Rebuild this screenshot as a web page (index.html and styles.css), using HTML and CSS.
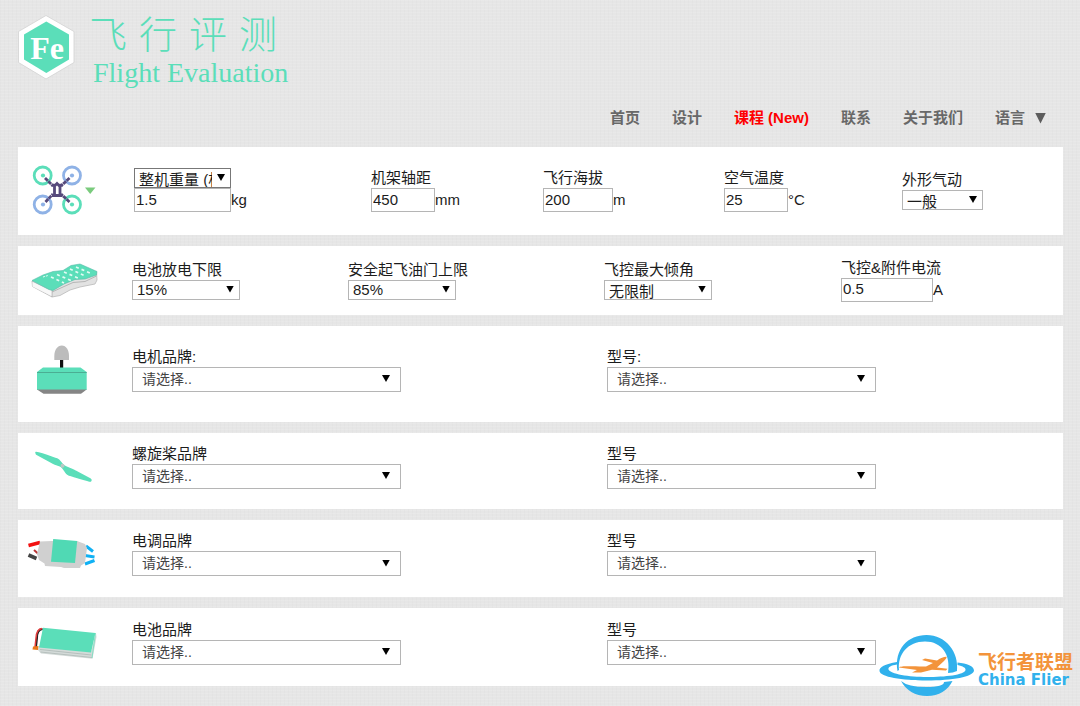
FILE: index.html
```html
<!DOCTYPE html>
<html lang="zh-CN">
<head>
<meta charset="utf-8">
<meta name="viewport" content="width=device-width, initial-scale=1">
<title>飞行评测 Flight Evaluation</title>
<link rel="stylesheet" href="styles.css">
</head>
<body>
<header class="header">
  <div class="brand">
    <svg class="brand-mark" viewBox="16 14 60 66" aria-label="Fe">
      <path d="M46 15.500 74 31.500V62.500L46 79 18.500 62.500V31.500Z" fill="#fff" stroke="#d2d2d2" stroke-width=".8"/>
      <path d="M46.300 21.500 69 34.500V59.500L46.300 73 24 59.500V34.500Z" fill="#5bdeb9"/>
      <text class="mark-text" x="47" y="58.500" text-anchor="middle">Fe</text>
    </svg>
    <div class="brand-name">
      <h1 class="title"><span>飞</span><span>行</span><span>评</span><span>测</span></h1>
      <p class="subtitle">Flight Evaluation</p>
    </div>
  </div>
  <nav class="nav">
    <a href="#">首页</a>
    <a href="#">设计</a>
    <a href="#" class="new">课程 (New)</a>
    <a href="#">联系</a>
    <a href="#">关于我们</a>
    <a href="#" class="language">语言 <i class="caret"></i></a>
  </nav>
</header>

<main class="panels">
  <section class="panel general">
    <svg class="icon" viewBox="24 160 76 60" aria-hidden="true">
      <g fill="none" stroke-width="2.800">
        <circle cx="42.700" cy="174.500" r="8.500" stroke="#5bdeb9"/><circle cx="72" cy="174.500" r="8.500" stroke="#8fb2e6"/>
        <circle cx="42.700" cy="203.500" r="8.500" stroke="#8fb2e6"/><circle cx="72" cy="203.500" r="8.500" stroke="#5bdeb9"/>
      </g>
      <circle cx="43" cy="174.500" r="2.100" fill="#5bdeb9"/><circle cx="72" cy="174.500" r="2.100" fill="#8fb2e6"/>
      <circle cx="43" cy="203.500" r="2.100" fill="#8fb2e6"/><circle cx="72" cy="203.500" r="2.100" fill="#5bdeb9"/>
      <g fill="none" stroke="#56497b" stroke-width="2.800">
        <path d="M45 177 53 185M69.500 177 61 185M45.500 201 53 193M69.500 201 61 193" stroke-dasharray="4 .6"/>
        <path d="M52 184 55 184.500 57 182.500 59 184.500 62.500 184M52 194.500H62.500M54.500 184V194.500M60 184V194.500"/>
      </g>
      <path d="M85 186.500H95.500L90.200 193Z" fill="#7acb7d"/>
    </svg>
    <div class="fields">
      <div class="field">
        <span class="select w-weight dark"><select class="low" aria-label="整机重量"><option>整机重量 (相关)</option></select></span>
        <div class="entry"><input class="w-weight" type="text" value="1.5" aria-label="重量 kg"><span>kg</span></div>
      </div>
      <div class="field">
        <label for="frame">机架轴距</label>
        <div class="entry"><input id="frame" class="w-small" type="text" value="450"><span>mm</span></div>
      </div>
      <div class="field">
        <label for="altitude">飞行海拔</label>
        <div class="entry"><input id="altitude" class="w-medium" type="text" value="200"><span>m</span></div>
      </div>
      <div class="field">
        <label for="temp">空气温度</label>
        <div class="entry"><input id="temp" class="w-small" type="text" value="25"><span>°C</span></div>
      </div>
      <div class="field">
        <label for="aero">外形气动</label>
        <span class="select w-aero"><select id="aero" class="low"><option>一般</option></select></span>
      </div>
    </div>
  </section>

  <section class="panel control">
    <svg class="icon" viewBox="24 251 76 60" aria-hidden="true">
      <path d="M32 281 48 289 64 283 74 279 85 278 96.500 272 97 280 95 284 80 287 70 290 60 295.500 52 297 32.500 286.500Z" fill="#e2e2e2" stroke="#b9b9b9" stroke-width=".8"/>
      <path d="M52 292 63 287 73 282.500 85 281.500 96.500 276M52 290V297" fill="none" stroke="#a9a9a9" stroke-width=".8"/>
      <path d="M32.500 282V286.500L51.500 296V291Z" fill="#f8f8f8"/>
      <path d="M32 280.500 43 275 53 271.500 63 270.500 71 265.500 80 264 97 271.500 96.500 275 85 279 75 279.500 64 284 53 290.500 49 289.500Z" fill="#5bdeb9" stroke="#59baa9" stroke-width=".6"/>
      <g stroke="#e4fbf4" stroke-width="1.700" fill="none">
        <path d="M70 269 84 275.500" stroke-dasharray="3 3"/><path d="M76 267 90 273" stroke-dasharray="3 3"/>
        <path d="M64 272 78 278" stroke-dasharray="3 3"/><path d="M57 274.500 71 280.500" stroke-dasharray="3 3"/>
        <path d="M51 277 64 283" stroke-dasharray="3 3"/><path d="M43 277 48 275.500" stroke-width="1" stroke-dasharray="2 1"/>
      </g>
    </svg>
    <div class="fields">
      <div class="field">
        <label for="discharge">电池放电下限</label>
        <span class="select w-limit"><select id="discharge"><option>15%</option></select></span>
      </div>
      <div class="field">
        <label for="throttle">安全起飞油门上限</label>
        <span class="select w-limit"><select id="throttle"><option>85%</option></select></span>
      </div>
      <div class="field">
        <label for="tilt">飞控最大倾角</label>
        <span class="select w-limit"><select id="tilt" class="low"><option>无限制</option></select></span>
      </div>
      <div class="field">
        <label for="current">飞控&amp;附件电流</label>
        <div class="entry"><input id="current" class="w-current" type="text" value="0.5"><span>A</span></div>
      </div>
    </div>
  </section>

  <section class="panel product motor">
    <svg class="icon" viewBox="24 340 76 60" aria-hidden="true">
      <path d="M54.300 360V356C54.300 350 57.500 345.500 61.800 345.500S69 350 69 356V360Z" fill="#bcbcbc"/>
      <path d="M60 360H63.200V368H60Z" fill="#111"/>
      <path d="M43 367.500H80.500L86.700 372V390H37V372Z" fill="#5bdeb9"/>
      <path d="M37 389.500H86.700L81 393.700H43.500Z" fill="#858585"/>
      <path d="M37 372.500H86.700" stroke="#4aa78e" stroke-width=".9"/>
    </svg>
    <div class="fields">
      <div class="field"><label for="motor">电机品牌:</label><span class="select"><select id="motor"><option>请选择..</option></select></span></div>
      <div class="field"><label for="motor-type">型号:</label><span class="select"><select id="motor-type"><option>请选择..</option></select></span></div>
    </div>
  </section>

  <section class="panel product propeller">
    <svg class="icon" viewBox="24 437 76 60" aria-hidden="true">
      <path d="M36 452.500C42 453.500 51 457 57 459 60 460 61 464 64 466 67 468 71 468.500 75 471L90 479C91.500 480 91 481 89.500 481 83 479 74 476.500 69 475 65 474 65 469 61.500 466.500 59 465 56 465 53 463L36.500 454Z" fill="#5bdeb9" stroke="#5bdeb9" stroke-width="1.600" stroke-linejoin="round"/>
      <circle cx="62.500" cy="465.800" r="2" fill="#b9c9c5"/>
    </svg>
    <div class="fields">
      <div class="field"><label for="prop">螺旋桨品牌</label><span class="select"><select id="prop"><option>请选择..</option></select></span></div>
      <div class="field"><label for="prop-type">型号</label><span class="select"><select id="prop-type"><option>请选择..</option></select></span></div>
    </div>
  </section>

  <section class="panel product esc">
    <svg class="icon" viewBox="24 525 76 60" aria-hidden="true">
      <g fill="none" stroke-width="3.600">
        <path d="M28.500 545.500 40 542.500" stroke="#f21111"/><path d="M34 550 38.500 554" stroke="#b93434" stroke-width="2"/><path d="M28.500 555 36.500 558.500" stroke="#444"/>
        <path d="M86 546 93 551.500M85 555.500 94.500 557M85 564 94.500 560.500" stroke="#10b1f4" stroke-width="3"/>
      </g>
      <path d="M40 541.500 52 541 77 541 85 544 87 548 85 563 81 565.500 80 568 64 568 61 567 45 566 44.500 563.500 39 560 37 554Z" fill="#d0d0d0"/>
      <path d="M53.200 539 77.200 541 75 563 51 561.800Z" fill="#50d9b4"/>
    </svg>
    <div class="fields">
      <div class="field"><label for="esc">电调品牌</label><span class="select"><select id="esc"><option>请选择..</option></select></span></div>
      <div class="field"><label for="esc-type">型号</label><span class="select"><select id="esc-type"><option>请选择..</option></select></span></div>
    </div>
  </section>

  <section class="panel product battery">
    <svg class="icon" viewBox="24 613 76 60" aria-hidden="true">
      <path d="M39 646 91 652 96 633 96.500 637 92.500 658.800 41 653.500 38 650Z" fill="#d4dbd9"/>
      <path d="M40 649.500 91.500 655M40.500 652 92 657.500" stroke="#aeb9b6" stroke-width=".8"/>
      <path d="M43 627.700 95.500 633 91 652.500 39 647.500Z" fill="#5bdeb9"/>
      <path d="M95.500 633 92 658" stroke="#86dfc5"/>
      <path d="M42.500 629Q37 629.500 37 638L36 647" fill="none" stroke="#222" stroke-width="2"/>
      <path d="M42 628.500Q36.500 629 36 638L35 647" fill="none" stroke="#e53d3d" stroke-width="1.500"/>
      <path d="M33 646.500 38.500 646 38 650 32.500 649.500Z" fill="#ec791b"/>
    </svg>
    <div class="fields">
      <div class="field"><label for="battery">电池品牌</label><span class="select"><select id="battery"><option>请选择..</option></select></span></div>
      <div class="field"><label for="battery-type">型号</label><span class="select"><select id="battery-type"><option>请选择..</option></select></span></div>
    </div>
  </section>
</main>

<svg class="watermark" viewBox="876 632 204 68" role="img" aria-label="飞行者联盟 China Flier">
  <path d="M897.500 671C894 649 908 635 926.500 635 946 635 959 652 957 671Q953 673 948 673C951 655 942 641.500 925 641.500 908 641.500 897.500 654 899 670Z" fill="#31b1ec"/>
  <path d="M901 681Q908 687 926 687T944 682L952.500 681C948 690 939 696 927 696S906 690 901 681Z" fill="#31b1ec"/>
  <path d="M897 662C885 664 879 667 879.500 671 880 677 902 680.500 927 680.500S973.500 677 974 670.500C974 666 967 663.500 957.500 662.500V665C963 666 966 668 965.500 670 964.500 675 945 677 927 677S890 674 888.500 669.500C888 667 891 665.500 897 664.500Z" fill="#31b1ec"/>
  <path d="M899 667.500C901 665.500 917 666.800 926 666.500L933 663 922 660 925 658.500 937 660.500Q943 656.500 946.500 656.800 947 658 944 661L937 667.500 947.500 668.800 946 670.500 932 669.800 921 672.500 912 672.500 917 670Z" fill="#f3943b"/>
  <text class="club" x="978" y="669">飞行者联盟</text>
  <text class="club-en" x="978" y="685">China Flier</text>
</svg>
</body>
</html>
```
FILE: styles.css
```css
* { box-sizing: border-box; }

body {
  margin: 0;
  padding: 14px 17px 20px 18px;
  position: relative;
  color: #1c1c1c;
  font: 15px/20px "Liberation Sans", "Noto Sans CJK SC", sans-serif;
  background-color: #e6e6e6;
  background-image:
    repeating-linear-gradient(0deg, rgba(255, 255, 255, .1) 0 1px, transparent 1px 3px),
    repeating-linear-gradient(90deg, rgba(0, 0, 0, .01) 0 1px, transparent 1px 4px);
}

.brand { display: flex; align-items: flex-start; gap: 13px; }
.brand-mark { width: 60px; height: 66px; margin-left: -2px; }
.mark-text { font: bold 32px "Liberation Serif", serif; fill: #fff; }
.brand-name { color: #5bdeb9; }
.title {
  display: flex;
  gap: 12px;
  margin: 0;
  font: 300 38px/36px "Noto Sans CJK SC", sans-serif;
}
.subtitle {
  margin: 0;
  padding: 6px 0 0 4px;
  font: 28px/34px "Liberation Serif", serif;
}

.nav {
  display: flex;
  justify-content: flex-end;
  gap: 32px;
  margin-top: 18px;
  padding-right: 17px;
  font-weight: bold;
}
.nav a { color: #686868; text-decoration: none; }
.nav .new { color: #f00; }
.language { display: flex; align-items: center; gap: 10px; }
.caret { width: 11px; height: 11px; background: #5c5c5c; clip-path: polygon(0 0, 100% 0, 50% 100%); }

.panels { display: grid; gap: 11px; margin-top: 19px; }
.panel { display: flex; align-items: center; gap: 32px; padding-left: 6px; background: #fff; }
.general { min-height: 88px; gap: 34px; }
.control { min-height: 69px; }
.product { padding-bottom: 8px; }
.motor { min-height: 96px; }
.propeller { min-height: 76px; }
.esc { min-height: 77px; }
.battery { min-height: 78px; }

.icon { width: 76px; height: 60px; flex: none; }
.fields { display: grid; flex: 1; align-items: center; padding-bottom: 2px; }
.general .fields { grid-template-columns: 237fr 172fr 181fr 178fr 161fr; }
.control .fields { grid-template-columns: 216fr 256fr 237fr 222fr; }
.product .fields { grid-template-columns: 475fr 456fr; }

.field { min-width: 0; }
.field label { display: block; white-space: nowrap; }
.entry { display: flex; align-items: center; }

input, select {
  margin: 0;
  border: 1px solid #b5b5b5;
  border-radius: 0;
  background: #fff;
  color: inherit;
  font: inherit;
}
input { height: 24px; padding: 0 2px 2px 1px; }

.select { display: block; position: relative; width: 108px; }
.select::after {
  content: "";
  position: absolute;
  right: 6px;
  top: 50%;
  width: 8px;
  height: 7px;
  margin-top: -4px;
  background: #000;
  clip-path: polygon(0 0, 100% 0, 50% 100%);
  pointer-events: none;
}
select {
  display: block;
  width: 100%;
  height: 20px;
  padding: 0 18px 0 4px;
  line-height: 18px;
  appearance: none;
  overflow: hidden;
}
select.low { padding-top: 2px; }
.dark select { border-color: #777; }
.product .select { width: 269px; }
.product .select::after { right: 11px; }
.product select { height: 25px; padding-bottom: 1px; padding-left: 9px; color: #444; font-size: 14px; }

.w-weight, .select.w-weight { width: 97px; }
.w-small { width: 64px; }
.w-medium { width: 70px; }
.select.w-aero { width: 81px; }
.w-current { width: 92px; }

.watermark { position: absolute; right: 0; bottom: 6px; width: 204px; height: 68px; }
.club { font: bold 19px "Liberation Sans", "Noto Sans CJK SC", sans-serif; fill: #f3943b; }
.club-en { font: bold 15px "DejaVu Sans", sans-serif; fill: #31b1ec; }
```
